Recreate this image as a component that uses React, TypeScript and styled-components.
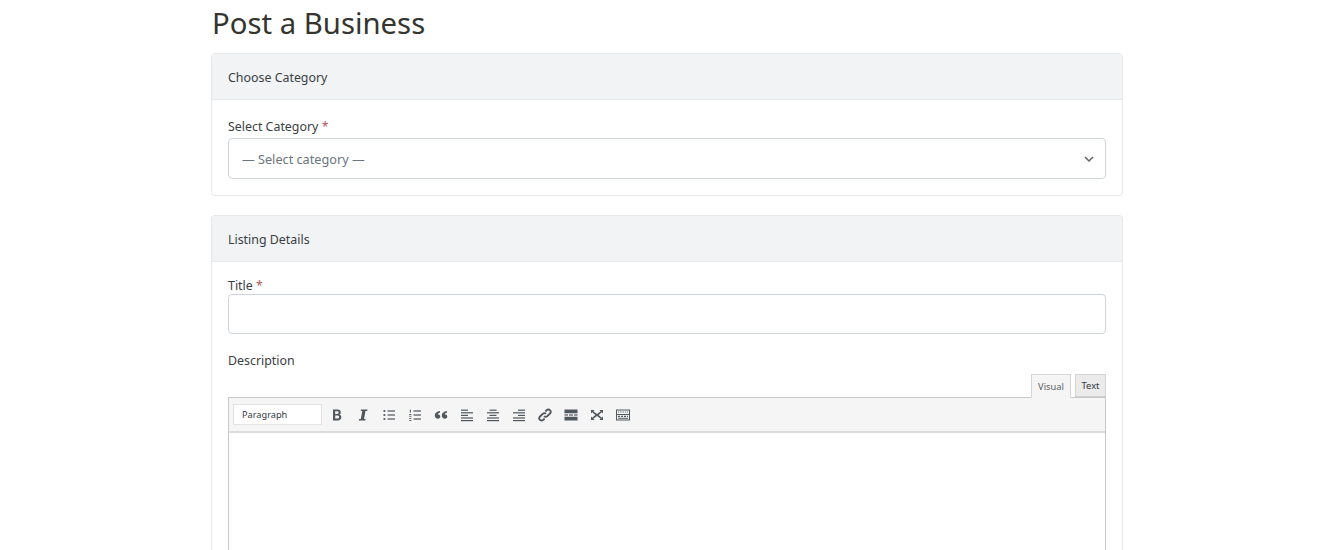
import { FC, ReactNode } from 'react';
import styled, { createGlobalStyle } from 'styled-components';

const GlobalStyle = createGlobalStyle`
	html, body {
		margin: 0;
		padding: 0;
		height: 550px;
		overflow: hidden;
		background: #fff;
		font-family: 'Noto Sans', 'Open Sans', sans-serif;
		color: #3a3e42;
	}
`;

const Page = styled.div`
	width: 912px;
	margin-left: 211px;
`;

const Title = styled.h1`
	margin: 0;
	height: 53px;
	padding: 2px 0 0 1px;
	box-sizing: border-box;
	font-size: 29.3px;
	line-height: 42px;
	font-weight: 400;
	color: #35352f;
`;

const Card = styled.section`
	border: 1px solid #e6e8ea;
	border-radius: 4px;
	margin-bottom: 19px;
	background: #fff;
`;

const CardHeader = styled.div`
	height: 43px;
	padding: 2px 16px 0;
	display: flex;
	align-items: center;
	background: #f2f3f5;
	border-bottom: 1px solid #e6e8ea;
	border-radius: 3px 3px 0 0;
	font-size: 12.4px;
`;

const CardBody = styled.div<{ $top: number }>`
	padding: ${p => p.$top}px 16px 16px;
`;

const Label = styled.label<{ $gap?: number }>`
	display: block;
	font-size: 12.4px;
	line-height: 18px;
	margin-bottom: ${p => p.$gap ?? 0}px;
`;

const Required = styled.span`
	color: #b0575e;
`;

const Select = styled.div`
	height: 41px;
	box-sizing: border-box;
	border: 1px solid #ced4da;
	border-radius: 4px;
	padding: 0 9px 0 13px;
	display: flex;
	align-items: center;
	justify-content: space-between;
	font-size: 12.7px;
	color: #6c757d;
`;

const Input = styled.div`
	height: 40px;
	box-sizing: border-box;
	border: 1px solid #ced4da;
	border-radius: 4px;
	margin-bottom: 18px;
`;

const EditorTabs = styled.div`
	display: flex;
	justify-content: flex-end;
	gap: 4px;
	margin-top: 4px;
	position: relative;
	z-index: 1;
	height: 24px;
`;

const Tab = styled.div<{ $active?: boolean; $width: number }>`
	width: ${p => p.$width}px;
	height: ${p => (p.$active ? 24 : 23)}px;
	box-sizing: border-box;
	display: flex;
	align-items: center;
	justify-content: center;
	font-size: 9.3px;
	color: ${p => (p.$active ? '#555d66' : '#32373c')};
	background: ${p => (p.$active ? '#f5f5f5' : '#ebebeb')};
	border: 1px solid #d5d5d5;
	border-bottom: ${p => (p.$active ? '1px solid #f5f5f5' : '1px solid #cfcfcf')};
`;

const Editor = styled.div`
	margin-top: -1px;
	border: 1px solid #c8c8c8;
	border-bottom: 0;
`;

const Toolbar = styled.div`
	height: 35px;
	box-sizing: border-box;
	display: flex;
	align-items: center;
	background: #f5f5f5;
	border-bottom: 2px solid #dcdcdc;
	padding-left: 4px;
`;

const FormatSelect = styled.div`
	width: 89px;
	height: 21px;
	box-sizing: border-box;
	border: 1px solid #e3e3e3;
	background: #fff;
	display: flex;
	align-items: center;
	padding-left: 8px;
	font-size: 9.2px;
	color: #32373c;
	margin-right: 2px;
`;

const ToolButton = styled.span`
	width: 26px;
	height: 26px;
	display: flex;
	align-items: center;
	justify-content: center;
	color: #50575e;
`;

const EditArea = styled.div`
	height: 200px;
	background: #fff;
`;

const Icon: FC<{ children: ReactNode }> = ({ children }) => (
	<ToolButton>
		<svg width='14' height='14' viewBox='0 0 14 14' fill='currentColor'>
			{children}
		</svg>
	</ToolButton>
);

const lines = (rows: [number, number, number][]) =>
	rows.map(([x, y, w]) => <rect key={`${x}-${y}`} x={x} y={y} width={w} height='1.2' />);

const App = () => {
	return (
		<Page>
			<GlobalStyle />
			<Title>Post a Business</Title>
			<Card>
				<CardHeader>Choose Category</CardHeader>
				<CardBody $top={18}>
					<Label $gap={2}>
						Select Category <Required>*</Required>
					</Label>
					<Select>
						— Select category —
						<svg width='14' height='14' viewBox='0 0 14 14' fill='none' stroke='#5f666d' strokeWidth='1.5'>
							<path d='M3 5l4 4 4-4' />
						</svg>
					</Select>
				</CardBody>
			</Card>
			<Card>
				<CardHeader>Listing Details</CardHeader>
				<CardBody $top={15}>
					<Label $gap={-1}>
						Title <Required>*</Required>
					</Label>
					<Input />
					<Label>Description</Label>
					<EditorTabs>
						<Tab $active $width={40}>Visual</Tab>
						<Tab $width={31}>Text</Tab>
					</EditorTabs>
					<Editor>
						<Toolbar>
							<FormatSelect>Paragraph</FormatSelect>
							<Icon>
								<path
									fillRule='evenodd'
									d='M3 1.5h4.6c2 0 3.2 1 3.2 2.7 0 1.1-.6 2-1.6 2.4 1.3.3 2.1 1.3 2.1 2.7 0 2-1.4 3.2-3.6 3.2H3zM5.2 3.2v2.8h1.9c1 0 1.5-.5 1.5-1.4s-.5-1.4-1.5-1.4zm0 4.4v3h2.2c1.1 0 1.7-.5 1.7-1.5s-.6-1.5-1.7-1.5z'
								/>
							</Icon>
							<Icon>
								<path d='M5 1.5h6.5l-.3 1.6H9.5L8 10.9h1.6l-.3 1.6H2.8l.3-1.6h1.7l1.5-7.8H4.7z' />
							</Icon>
							<Icon>
								<circle cx='2.4' cy='3' r='1.1' />
								<circle cx='2.4' cy='7' r='1.1' />
								<circle cx='2.4' cy='11' r='1.1' />
								{lines([
									[5.5, 2.4, 7.5],
									[5.5, 6.4, 7.5],
									[5.5, 10.4, 7.5],
								])}
							</Icon>
							<Icon>
								<rect x='1.8' y='1.6' width='1' height='3' />
								<rect x='1.2' y='6' width='2.2' height='.9' />
								<rect x='1.2' y='7.8' width='2.2' height='.9' />
								<rect x='1.2' y='10' width='2.2' height='.9' />
								<rect x='1.2' y='12' width='2.2' height='.9' />
								{lines([
									[5.5, 2.4, 7.5],
									[5.5, 6.4, 7.5],
									[5.5, 10.4, 7.5],
								])}
							</Icon>
							<Icon>
								<path d='M6 3v1.5C4.5 5 3.8 5.7 3.7 6.6c1.5-.3 2.6.6 2.6 2 0 1.3-1 2.2-2.3 2.2C2.2 10.8.8 9.5.8 7.6.8 5 2.8 3.2 6 3zm7 0v1.5c-1.5.5-2.2 1.2-2.3 2.1 1.5-.3 2.6.6 2.6 2 0 1.3-1 2.2-2.3 2.2-1.8 0-3.2-1.3-3.2-3.2C7.8 5 9.8 3.2 13 3z' />
							</Icon>
							<Icon>
								{lines([
									[1, 1.6, 7],
									[1, 4.2, 12],
									[1, 6.8, 7],
									[1, 9.4, 12],
									[1, 12, 12],
								])}
							</Icon>
							<Icon>
								{lines([
									[3.5, 1.6, 7],
									[1, 4.2, 12],
									[3.5, 6.8, 7],
									[1, 9.4, 12],
									[1, 12, 12],
								])}
							</Icon>
							<Icon>
								{lines([
									[6, 1.6, 7],
									[1, 4.2, 12],
									[6, 6.8, 7],
									[1, 9.4, 12],
									[1, 12, 12],
								])}
							</Icon>
							<Icon>
								<g fill='none' stroke='currentColor' strokeWidth='1.8'>
									<path d='M6 8.2a2.3 2.3 0 0 0 3.3 0l2.7-2.7a2.3 2.3 0 0 0-3.3-3.3L7.4 3.5' />
									<path d='M8 5.8a2.3 2.3 0 0 0-3.3 0L2 8.5a2.3 2.3 0 0 0 3.3 3.3l1.3-1.3' />
								</g>
							</Icon>
							<Icon>
								<path d='M.5 1.5h13v3.7h-13zM.5 8.8h13v3.7h-13z' />
								<rect x='.5' y='6.4' width='3.5' height='1.2' />
								<rect x='5' y='6.4' width='4' height='1.2' />
								<rect x='10' y='6.4' width='3.5' height='1.2' />
							</Icon>
							<Icon>
								<path d='M1 2h3.5L3.3 3.2 7 6l3.7-2.8L9.5 2H13v3.500l-1.2-1.200L8.600 7l3.200 2.700 1.200-1.200V12H9.500l1.200-1.200L7 8l-3.700 2.800L4.500 12H1V8.500l1.200 1.200L5.400 7 2.200 4.300 1 5.500z' />
							</Icon>
							<Icon>
								<path fillRule='evenodd' d='M0 1.5h14v11H0zM1 2.500v3.500h12V2.500zM1 7v4.500h12V7z' />
								<path
									opacity='.55'
									d='M2 3.200h1.400v1.500H2zM4.300 3.200h1.400v1.500H4.300zM6.600 3.200H8v1.500H6.600zM8.900 3.200h1.400v1.500H8.900zM11 3.200h1v1.500h-1z'
								/>
								<path d='M2 7.800h2v1.300H2zM5 7.800h2v1.300H5zM8 7.800h2v1.300H8zM11 7.800h1v1.300h-1zM2 9.700h10v1H2z' />
							</Icon>
						</Toolbar>
						<EditArea />
					</Editor>
				</CardBody>
			</Card>
		</Page>
	);
};

export default App;
